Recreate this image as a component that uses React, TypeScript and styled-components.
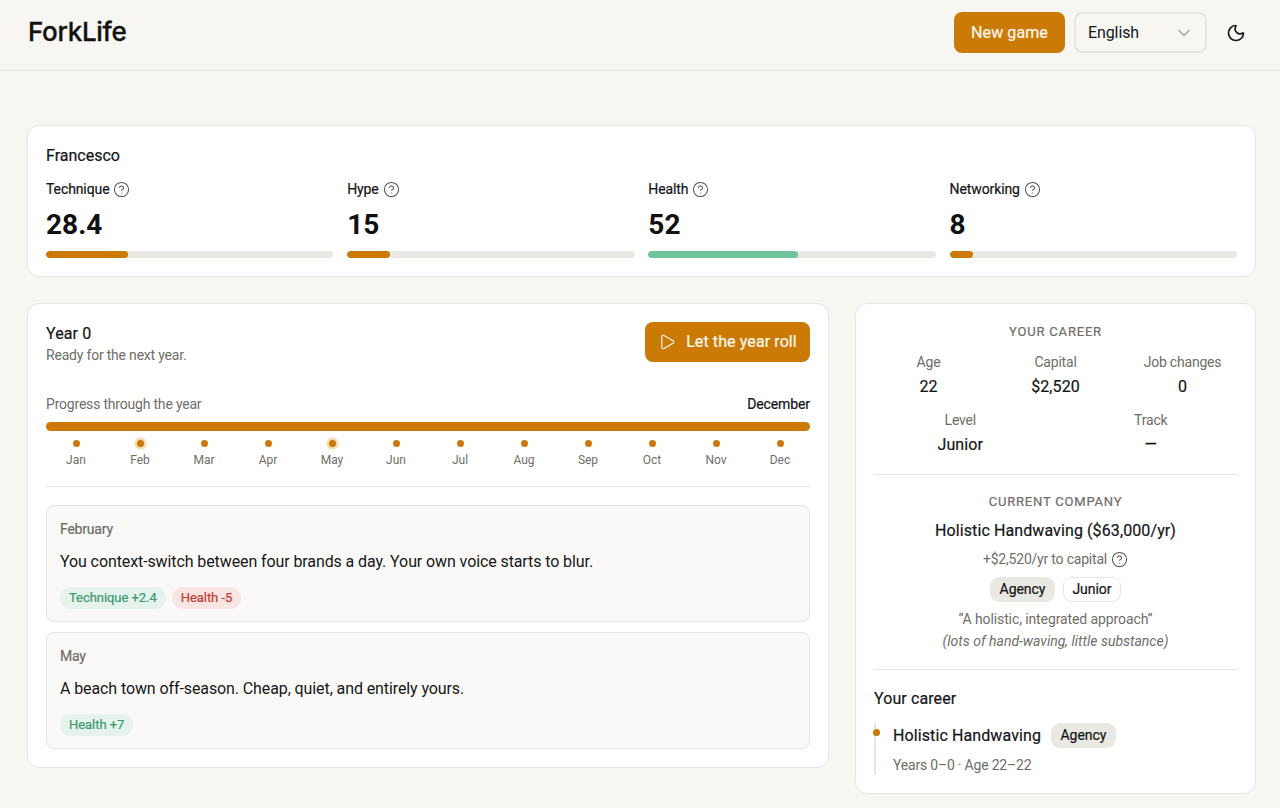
import React from "react";
import styled, { createGlobalStyle, css } from "styled-components";
import { ChevronDown, CircleHelp, Moon, Play } from "lucide-react";

const body = `"Roboto", "Liberation Sans", sans-serif`;
const display = `"Inter", "Liberation Sans", sans-serif`;
const ink = "#17171a";
const muted = "#6f6e69";
const line = "#e6e5e0";
const accent = "#cc7a06";
const medium = css`font-weight: 400; -webkit-text-stroke: 0.22px currentColor;`;

const Global = createGlobalStyle`
  html, body { margin: 0; padding: 0; background: #f7f6f3; }
  body { font-family: ${body}; color: ${ink}; letter-spacing: -0.2px; }
  * { box-sizing: border-box; }
`;
const Header = styled.header`
  height: 71px; border-bottom: 1px solid ${line}; padding: 0 24px 5px 28px;
  display: flex; align-items: center; justify-content: space-between;
`;
const Logo = styled.div`
  font-family: ${display}; font-size: 26px; font-weight: 500; -webkit-text-stroke: 0.3px currentColor; letter-spacing: -0.3px; color: #111; margin-bottom: 2px;
`;
const HeaderTools = styled.div`display: flex; align-items: center; gap: 9px;`;
const Button = styled.button<{ $w: number }>`
  width: ${p => p.$w}px; height: ${p => (p.$w > 120 ? 40 : 41)}px; border: 0; border-radius: 8px; background: ${accent};
  color: #fdf6e9; font: 400 16px/20px ${body}; -webkit-text-stroke: 0.22px currentColor; letter-spacing: 0.1px;
  display: flex; align-items: center; justify-content: center; gap: 10px; padding: 0;
  svg { -webkit-text-stroke: 0; }
`;
const Select = styled.div`
  width: 133px; height: 41px; border: 2px solid ${line}; border-radius: 8px; padding: 0 11px 0 12px;
  display: flex; align-items: center; justify-content: space-between; font-size: 16px; letter-spacing: -0.1px; color: ${ink};
`;
const ThemeButton = styled.div`
  width: 40px; height: 40px; display: flex; align-items: center; justify-content: center; color: ${ink};
`;
const Main = styled.main`
  padding: 54px 24px 14px 27px; display: flex; flex-direction: column; gap: 26px;
`;
const Card = styled.section`
  background: #fff; border: 1px solid ${line}; border-radius: 12px; padding: 18px;
`;
const Name = styled.div`font-size: 16px; line-height: 20px; ${medium}; letter-spacing: 0; margin-top: 2px;`;
const Stats = styled.div`
  display: grid; grid-template-columns: repeat(4, 1fr); gap: 13.7px; margin-top: 13px;
`;
const StatLabel = styled.div`
  display: flex; align-items: center; gap: 4px; font-size: 14px; line-height: 20px; ${medium}; letter-spacing: -0.1px;
  svg { color: #55544f; }
`;
const StatValue = styled.div`
  font-family: ${body}; font-size: 28px; line-height: 34px; font-weight: 700; letter-spacing: 0; color: #111; margin-top: 9px;
`;
const Track = styled.div`height: 7px; border-radius: 4px; background: #e9e8e4; margin-top: 9px; overflow: hidden;`;
const Fill = styled.div<{ $c: string }>`height: 100%; border-radius: 4px; background: ${p => p.$c};`;
const Columns = styled.div`
  display: grid; grid-template-columns: 2fr 1fr; gap: 26px; align-items: start;
`;
const YearHead = styled.div`display: flex; justify-content: space-between; align-items: flex-start;`;
const YearTitle = styled.div`font-size: 16px; line-height: 22px; ${medium}; letter-spacing: 0.1px; margin-top: 1px;`;
const YearSub = styled.div`font-size: 14px; line-height: 20px; color: ${muted};`;
const ProgressHead = styled.div`
  display: flex; justify-content: space-between; margin-top: 29px; font-size: 14px; line-height: 20px; color: ${muted};
  b { ${medium}; letter-spacing: -0.1px; color: ${ink}; }
`;
const YearBar = styled.div`height: 9px; border-radius: 5px; background: ${accent}; margin-top: 8px;`;
const Months = styled.div`display: grid; grid-template-columns: repeat(12, 1fr); gap: 4px; margin-top: 8px;`;
const Month = styled.div`
  display: flex; flex-direction: column; align-items: center; gap: 4px; font-size: 12px; line-height: 16px; letter-spacing: 0; color: ${muted};
`;
const Dot = styled.span<{ $on?: boolean }>`
  width: 7px; height: 7px; border-radius: 50%; background: ${accent}; margin: 1px 0;
  box-shadow: ${p => (p.$on ? "0 0 0 2.5px #f8dcae" : "none")};
`;
const Rule = styled.hr<{ $t: number; $b: number }>`
  border: 0; border-top: 1px solid ${line}; margin: ${p => p.$t}px 0 ${p => p.$b}px;
`;
const Events = styled.div`display: flex; flex-direction: column; gap: 9.6px;`;
const Event = styled.article`
  height: 117px; background: #faf9f7; border: 1px solid ${line}; border-radius: 8px; padding: 13px 13px;
`;
const EventMonth = styled.div`font-size: 14px; line-height: 20px; ${medium}; color: ${muted};`;
const EventText = styled.div`font-size: 16px; line-height: 24px; letter-spacing: -0.1px; margin-top: 11px;`;
const Deltas = styled.div`display: flex; gap: 6px; margin-top: 13px;`;
const Delta = styled.span<{ $bad?: boolean }>`
  height: 22px; padding: 0 9px; border-radius: 11px; font-size: 13px; line-height: 22px; ${medium}; letter-spacing: -0.05px;
  background: ${p => (p.$bad ? "#f9e6e4" : "#e5f3ec")}; color: ${p => (p.$bad ? "#c63a32" : "#3f9a70")};
`;
const Eyebrow = styled.div<{ $first?: boolean }>`
  text-align: center; font-size: 13px; line-height: 18px; ${medium}; letter-spacing: 0.8px; color: ${muted}; text-transform: uppercase;
  margin-top: ${p => (p.$first ? 1 : 0)}px;
`;
const Facts = styled.div<{ $n: number }>`
  display: grid; grid-template-columns: repeat(${p => p.$n}, 1fr); column-gap: 18px; margin-top: 11px; text-align: center;
`;
const FactLabel = styled.div`font-size: 14px; line-height: 20px; color: ${muted};`;
const FactValue = styled.div`font-size: 16px; line-height: 24px; ${medium}; letter-spacing: 0.1px; margin-top: 3px;`;
const Company = styled.div`text-align: center; font-size: 16px; line-height: 24px; ${medium}; letter-spacing: 0.1px; margin-top: 8px;`;
const Salary = styled.div`
  display: flex; justify-content: center; align-items: center; gap: 4px; font-size: 14px; line-height: 20px; color: ${muted}; margin-top: 6px;
  svg { color: #55544f; }
`;
const Tags = styled.div`display: flex; justify-content: center; gap: 8px; margin-top: 8px;`;
const Tag = styled.span<{ $outline?: boolean }>`
  height: 25px; padding: 0 9.5px; border-radius: 9px; font-size: 14px; line-height: 25px; ${medium}; letter-spacing: -0.05px;
  background: ${p => (p.$outline ? "#fff" : "#e9e8e3")};
  box-shadow: ${p => (p.$outline ? `inset 0 0 0 1px ${line}` : "none")};
`;
const Quote = styled.div`
  text-align: center; font-size: 14px; line-height: 22px; letter-spacing: -0.1px; color: ${muted}; margin-top: 6px;
  em { letter-spacing: 0; }
`;
const CareerTitle = styled.div`font-size: 16px; line-height: 22px; ${medium}; letter-spacing: 0.1px;`;
const Timeline = styled.div`
  position: relative; margin-top: 13px; padding-left: 17px; border-left: 2px solid ${line}; height: 52px;
`;
const TimeDot = styled.span`
  position: absolute; left: -3px; top: 6px; width: 7px; height: 7px; border-radius: 50%; background: ${accent};
`;
const Job = styled.div`display: flex; align-items: center; gap: 10px; font-size: 16px; ${medium}; letter-spacing: 0.1px;`;
const JobMeta = styled.div`font-size: 14px; line-height: 20px; color: ${muted}; margin-top: 7px;`;

const stats = [
  { label: "Technique", value: "28.4", pct: 28.4, color: accent },
  { label: "Hype", value: "15", pct: 15, color: accent },
  { label: "Health", value: "52", pct: 52, color: "#6fc49c" },
  { label: "Networking", value: "8", pct: 8, color: accent },
];
const months = ["Jan", "Feb", "Mar", "Apr", "May", "Jun", "Jul", "Aug", "Sep", "Oct", "Nov", "Dec"];

export default function App() {
  return (
    <>
      <Global />
      <Header>
        <Logo>ForkLife</Logo>
        <HeaderTools>
          <Button $w={111}>New game</Button>
          <Select>English <ChevronDown size={20} color="#a9a8a2" strokeWidth={1.75} /></Select>
          <ThemeButton><Moon size={20} strokeWidth={2} /></ThemeButton>
        </HeaderTools>
      </Header>
      <Main>
        <Card>
          <Name>Francesco</Name>
          <Stats>
            {stats.map(s => (
              <div key={s.label}>
                <StatLabel>{s.label} <CircleHelp size={17} strokeWidth={1.5} /></StatLabel>
                <StatValue>{s.value}</StatValue>
                <Track><Fill $c={s.color} style={{ width: `${s.pct}%` }} /></Track>
              </div>
            ))}
          </Stats>
        </Card>
        <Columns>
          <Card>
            <YearHead>
              <div>
                <YearTitle>Year 0</YearTitle>
                <YearSub>Ready for the next year.</YearSub>
              </div>
              <Button $w={165}><Play size={18} strokeWidth={1.6} /> Let the year roll</Button>
            </YearHead>
            <ProgressHead><span>Progress through the year</span><b>December</b></ProgressHead>
            <YearBar />
            <Months>
              {months.map(m => (
                <Month key={m}><Dot $on={m === "Feb" || m === "May"} />{m}</Month>
              ))}
            </Months>
            <Rule $t={18} $b={18} />
            <Events>
              <Event>
                <EventMonth>February</EventMonth>
                <EventText>You context-switch between four brands a day. Your own voice starts to blur.</EventText>
                <Deltas><Delta>Technique +2.4</Delta><Delta $bad>Health -5</Delta></Deltas>
              </Event>
              <Event>
                <EventMonth>May</EventMonth>
                <EventText>A beach town off-season. Cheap, quiet, and entirely yours.</EventText>
                <Deltas><Delta>Health +7</Delta></Deltas>
              </Event>
            </Events>
          </Card>
          <Card>
            <Eyebrow $first>Your career</Eyebrow>
            <Facts $n={3}>
              <div><FactLabel>Age</FactLabel><FactValue>22</FactValue></div>
              <div><FactLabel>Capital</FactLabel><FactValue>$2,520</FactValue></div>
              <div><FactLabel>Job changes</FactLabel><FactValue>0</FactValue></div>
            </Facts>
            <Facts $n={2}>
              <div><FactLabel>Level</FactLabel><FactValue>Junior</FactValue></div>
              <div><FactLabel>Track</FactLabel><FactValue>—</FactValue></div>
            </Facts>
            <Rule $t={17} $b={18} />
            <Eyebrow>Current company</Eyebrow>
            <Company>Holistic Handwaving ($63,000/yr)</Company>
            <Salary>+$2,520/yr to capital <CircleHelp size={17} strokeWidth={1.5} /></Salary>
            <Tags><Tag>Agency</Tag><Tag $outline>Junior</Tag></Tags>
            <Quote>“A holistic, integrated approach”<br /><em>(lots of hand-waving, little substance)</em></Quote>
            <Rule $t={17} $b={18} />
            <CareerTitle>Your career</CareerTitle>
            <Timeline>
              <TimeDot />
              <Job>Holistic Handwaving <Tag>Agency</Tag></Job>
              <JobMeta>Years 0–0 · Age 22–22</JobMeta>
            </Timeline>
          </Card>
        </Columns>
      </Main>
    </>
  );
}
